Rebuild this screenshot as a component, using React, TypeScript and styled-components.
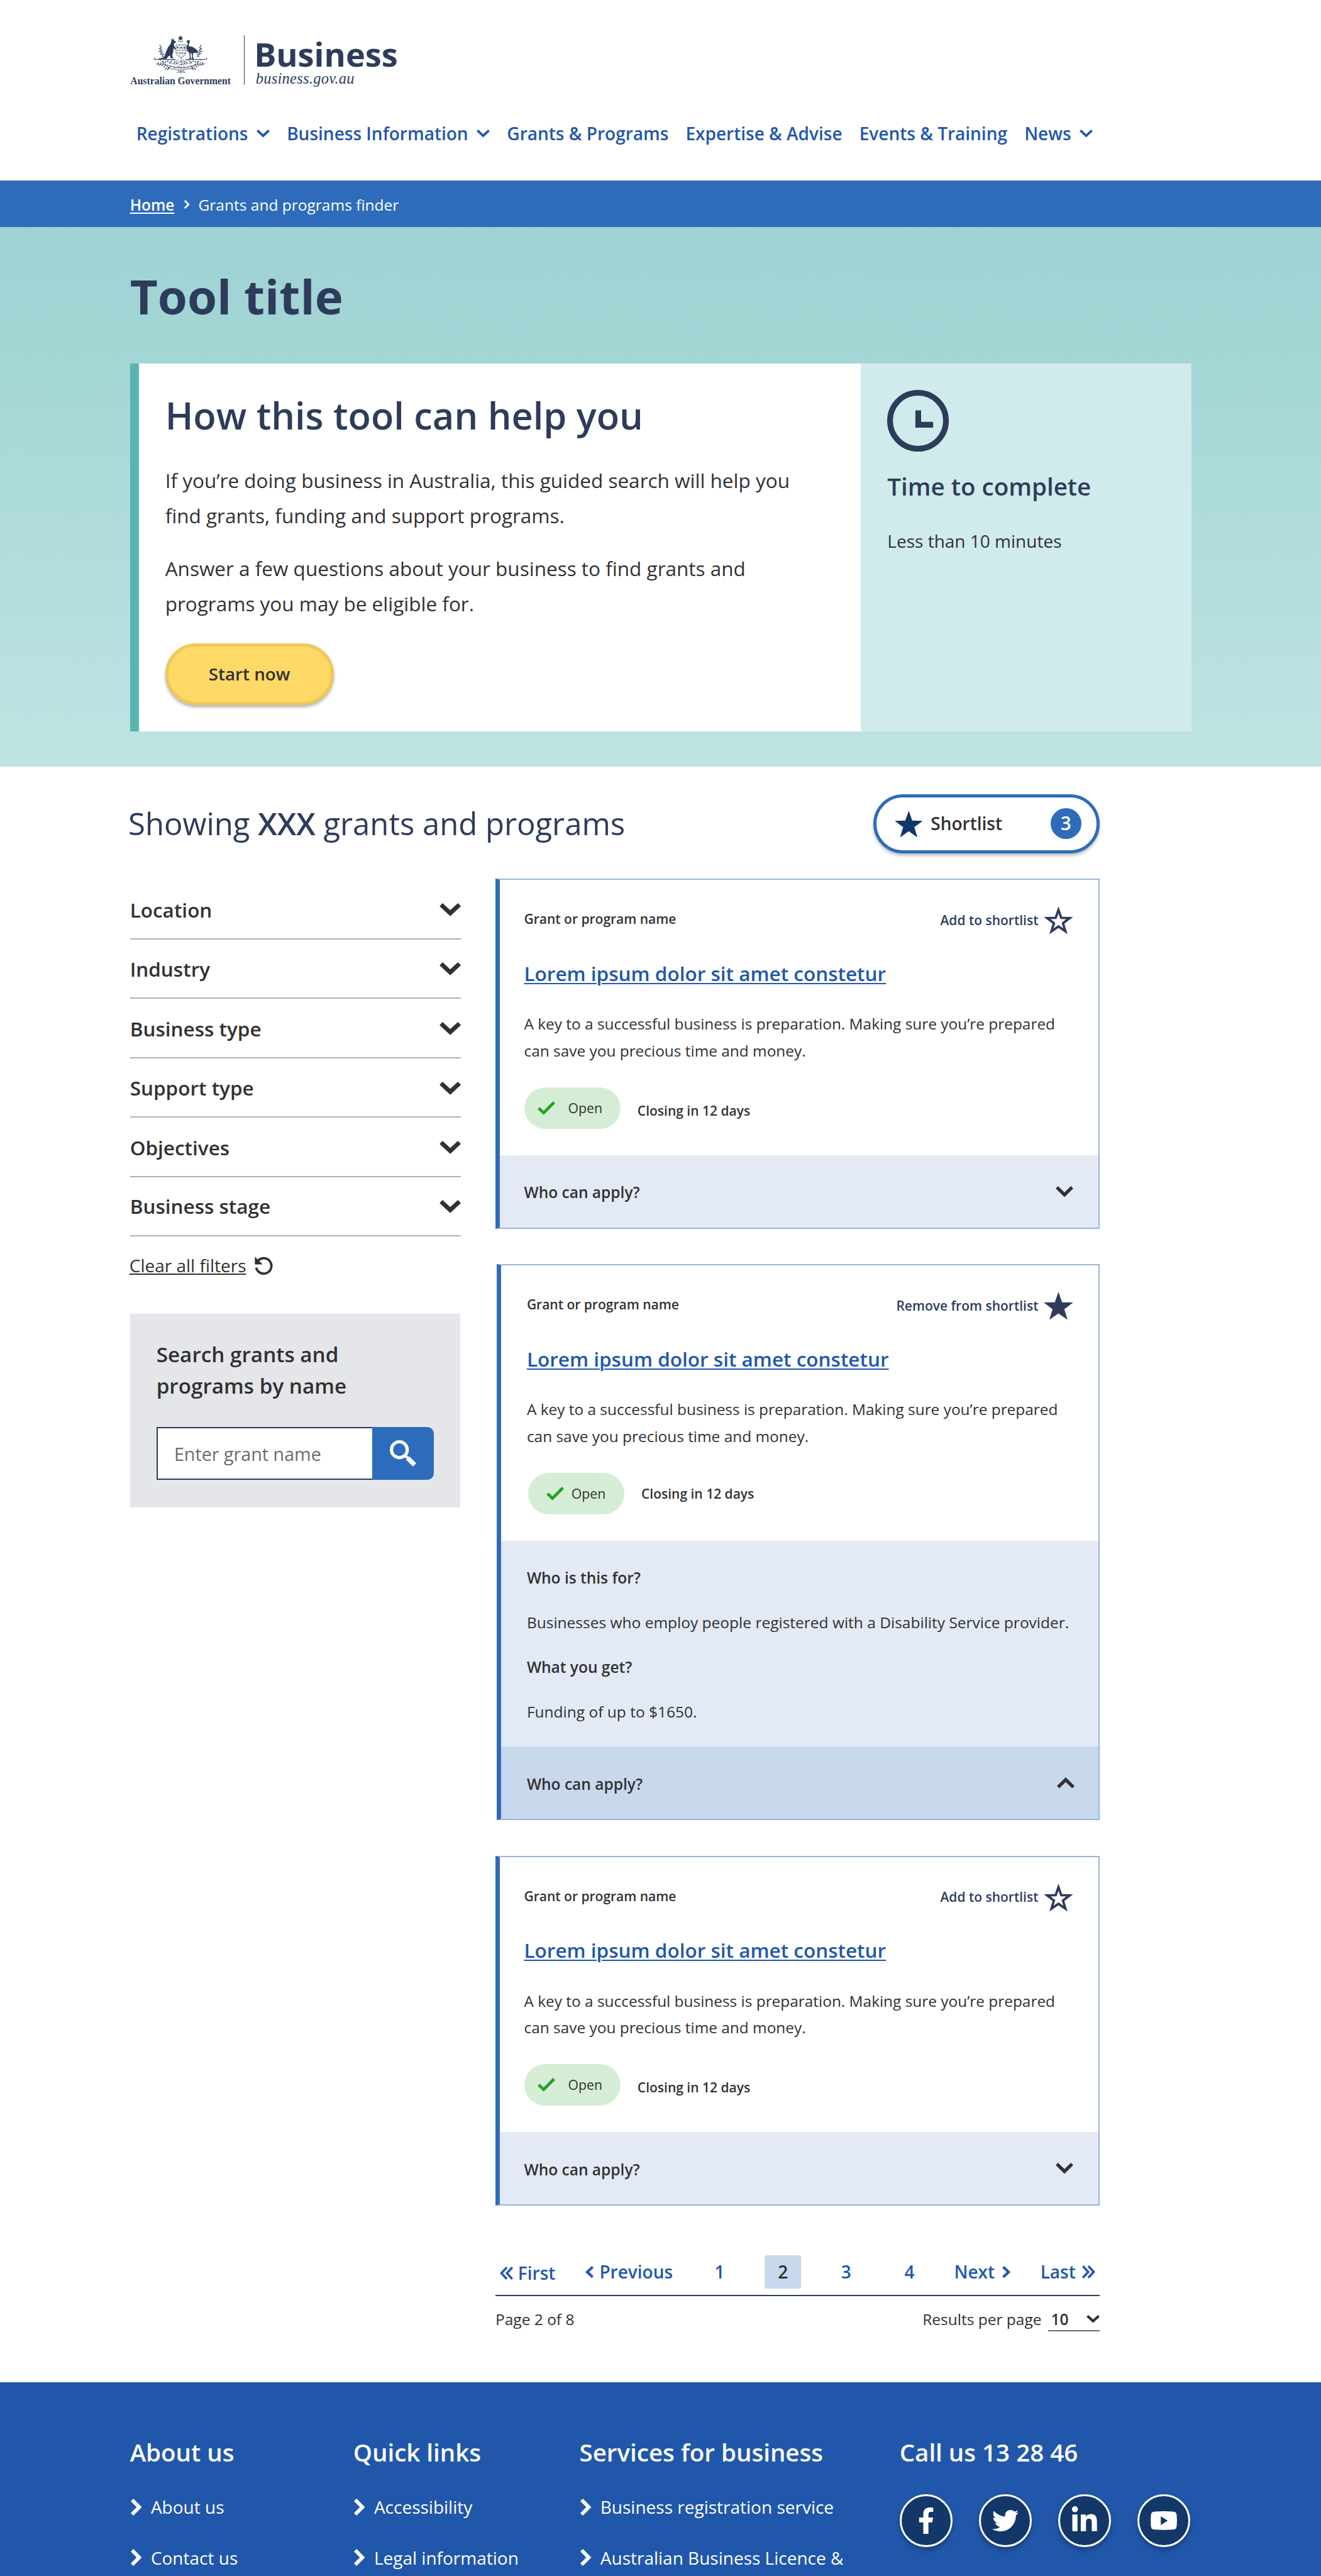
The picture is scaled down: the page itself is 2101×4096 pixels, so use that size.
import React from "react";
import styled, { createGlobalStyle, css } from "styled-components";
import { FaFacebookF, FaLinkedinIn, FaTwitter } from "react-icons/fa";

const color = {
  navy: "#2d3c5b",
  deep: "#11366a",
  link: "#1f57ab",
  blue: "#2e6cbb",
  footer: "#2157aa",
  text: "#313131",
  rule: "#a9b1bd",
  cardLine: "#9bb5db",
  pale: "#e3eaf6",
  paleActive: "#c8d8ed",
};

/* 1rem = 10 design units */
const GlobalStyle = createGlobalStyle`
  *, *::before, *::after { box-sizing: border-box; }
  html { font-size: 8.7555px; }
  body {
    margin: 0;
    background: #fff;
    color: ${color.text};
    font-family: "Open Sans", "Noto Sans", sans-serif;
  }
  h1, h2, h3, p, ul { margin: 0; padding: 0; }
  ul { list-style: none; }
  button, input { font-family: inherit; margin: 0; padding: 0; }
  svg { display: block; flex: none; overflow: visible; }
`;

/* ---------- icons ---------- */

type Direction = "down" | "up" | "left" | "right";

const Glyph = styled.svg<{ $w: number; $h: number }>`
  width: ${(p) => p.$w / 10}rem;
  height: ${(p) => p.$h / 10}rem;
`;

function chevronPoints(dir: Direction, w: number, h: number, s: number) {
  const e = s * 0.354;
  const t = s * 0.707;
  switch (dir) {
    case "down":
      return `${e},${e} ${w / 2},${h - t} ${w - e},${e}`;
    case "up":
      return `${e},${h - e} ${w / 2},${t} ${w - e},${h - e}`;
    case "left":
      return `${w - e},${e} ${t},${h / 2} ${w - e},${h - e}`;
    default:
      return `${e},${e} ${w - t},${h / 2} ${e},${h - e}`;
  }
}

function Chevron({ dir, w, h, s }: { dir: Direction; w: number; h: number; s: number }) {
  return (
    <Glyph $w={w} $h={h} viewBox={`0 0 ${w} ${h}`}>
      <polyline points={chevronPoints(dir, w, h, s)} fill="none" stroke="currentColor" strokeWidth={s} />
    </Glyph>
  );
}

function DoubleChevron({ dir }: { dir: "left" | "right" }) {
  const pts = chevronPoints(dir, 14, 24, 4);
  return (
    <Glyph $w={24} $h={24} viewBox="0 0 24 24">
      <g fill="none" stroke="currentColor" strokeWidth="4">
        <polyline points={pts} />
        <polyline points={pts} transform="translate(10 0)" />
      </g>
    </Glyph>
  );
}

function starPath(cx: number, cy: number, r: number) {
  const pts: string[] = [];
  for (let i = 0; i < 10; i++) {
    const radius = i % 2 ? r * 0.4 : r;
    const a = -Math.PI / 2 + (i * Math.PI) / 5;
    pts.push(`${(cx + radius * Math.cos(a)).toFixed(2)} ${(cy + radius * Math.sin(a)).toFixed(2)}`);
  }
  return `M${pts.join("L")}Z`;
}

function Star({ w, outline }: { w: number; outline?: boolean }) {
  const d = starPath(26.75, 28.1, 28.1) + (outline ? starPath(26.75, 28.1, 15) : "");
  return (
    <Glyph $w={w} $h={w * 0.95} viewBox="0 0 53.5 50.8">
      <path d={d} fill="currentColor" fillRule="evenodd" />
    </Glyph>
  );
}

function Check() {
  return (
    <Glyph $w={32} $h={25} viewBox="0 0 32 25">
      <polyline points="2,12.5 11,21 30,2" fill="none" stroke="#27a127" strokeWidth="5.4" />
    </Glyph>
  );
}

function Reset() {
  return (
    <Glyph $w={33} $h={33} viewBox="0 0 33 33">
      <path d="M2.8 20A14 14 0 1 0 6.6 7" fill="none" stroke="currentColor" strokeWidth="4.2" />
      <path d="M.4 .4V14.2H14.6Z" fill="currentColor" />
    </Glyph>
  );
}

function Magnifier() {
  return (
    <Glyph $w={48} $h={48} viewBox="0 0 48 48">
      <g fill="none" stroke="#fff">
        <circle cx="17.3" cy="17.3" r="14.4" strokeWidth="5.8" />
        <path d="M27 27L34 34" strokeWidth="5" />
        <path d="M32.5 32.5L45 45" strokeWidth="8.4" />
      </g>
    </Glyph>
  );
}

function Clock() {
  return (
    <Glyph $w={112} $h={112} viewBox="0 0 112 112">
      <circle cx="56" cy="56" r="50.8" fill="none" stroke={color.navy} strokeWidth="10.4" />
      <path d="M56.5 37V63.2H83.5" fill="none" stroke={color.navy} strokeWidth="10.4" />
    </Glyph>
  );
}

function YouTubeMark() {
  return (
    <Glyph $w={48} $h={34} viewBox="0 0 48 34">
      <path
        d="M6 .8Q24-.8 42 .8Q47 1.4 47.4 7Q48.4 17 47.4 27Q47 32.600 42 33.200Q24 34.800 6 33.200Q1 32.600 .6 27Q-.4 17 .6 7Q1 1.400 6 .8ZM18.500 9V25L31 17Z"
        fill="#fff"
        fillRule="evenodd"
      />
    </Glyph>
  );
}

function Sprig() {
  return (
    <g fill="none" stroke="currentColor" strokeLinecap="round">
      <path d="M178 158Q196 168 206 182Q220 190 246 196M186 104Q184 124 200 142M262 160Q236 164 232 178Q246 186 262 176" strokeWidth="2.200" />
      <path
        d="M182 80l4 10M190 92l-6 8M178 98l7 6M193 104l-5 9M176 114l10 3M198 116l-7 8M182 128l10 2M205 128l-8 6M192 140l10 1M164 182l9 3M172 174l4 9M178 190l8-5M186 176l3 9M192 192l7-6M198 178l4 9M204 200l6-7M210 184l5 8M212 212l7-9M222 190l4 8M224 214l4-11M232 200l-2 9M216 168l-6 7M226 162l-2 9M196 168l7 4M244 170l-8 4"
        strokeWidth="4"
      />
      <path d="M152 150q-4 8 8 8H264" strokeWidth="4" />
      <path d="M268 162q-12 12-4 24M280 160q-14 8-10 22q8 4 14-6" strokeWidth="3" />
    </g>
  );
}

function Crest() {
  return (
    <Glyph $w={96} $h={70} viewBox="150 26 288 210" color={color.navy}>
      <g fill="currentColor">
        <path d="M294 27l3 8 8-3-4 8 8 3-8 3 3 8-8-4-2 5-3-5-7 4 3-8-8-3 8-3-4-8 8 3z" />
        <path d="M281 58h6v4h-6zM291 58h7v4h-7zM302 58h6v4h-6z" />
        <path d="M245 44l7 7 2-9 5 12q9 3 12 11l-11 4q-4 8 1 18l9 14-4 3-11-8q3 14-3 26l-3 18 8 11h-18l-1-15q-11 4-15 12l-5 7h-42v-4q26-1 31-9q6-22 12-34q8-20 20-34q8-14 5-30z" />
        <path d="M325 61l7-7q8-5 12 2q3 6-2 14q-7 10-1 17q12-1 22 4q14 8 24 20q4 8-1 13q-6-3-12-3q-8 4-12 3v24l7 8h-12l-1-30-8-2 2 24 4 8h-13l4-8-3-26q-12-8-13-20q-5-14 4-26q3-6 1-9z" />
      </g>
      <Sprig />
      <g transform="translate(588 0) scale(-1 1)">
        <Sprig />
      </g>
      <g fill="none" stroke="currentColor">
        <path d="M270 80q27-6 54 0v36q0 22-27 32q-27-10-27-32z" strokeWidth="2.500" />
        <path d="M288 78v64M307 78v64M270 108h54" strokeWidth="1.600" />
        <path d="M279 86v14M273 93h12M316 86v16M310 94h12" strokeWidth="3" />
        <path d="M294 90l8 8M302 90l-8 8M276 122h8M292 126q6-8 12 0M312 124h8" strokeWidth="4" />
        <path d="M298 148v44M298 168q-14-2-22 12M298 168q14-2 22 12M298 184q-12 0-18 10M298 184q12 0 18 10" strokeWidth="2.600" />
        <path d="M236 194q62 16 118 0l-2 14q-58 14-114 0zM296 214v20M282 214q4 12-10 18M310 214q-2 12 12 18M288 222h20M278 228h38" strokeWidth="2.400" />
      </g>
      <CrestMotto x="296" y="209" textAnchor="middle">
        AUSTRALIA
      </CrestMotto>
    </Glyph>
  );
}

const CrestMotto = styled.text`
  font: 700 14px "Liberation Serif", serif;
  letter-spacing: 1px;
  fill: ${color.navy};
`;

/* ---------- page shell ---------- */

const Page = styled.div`
  display: flex;
  flex-direction: column;
  height: 100vh;
  overflow: hidden;
`;

const Header = styled.header`
  flex: none;
  height: 32.8rem;
  padding: 6.4rem 0 0 23.6rem;
  background: #fff;
`;

const Brand = styled.div`
  display: flex;
  height: 9.3rem;
  color: ${color.navy};
`;

const GovMark = styled.div`
  display: flex;
  flex-direction: column;
  align-items: center;
  justify-content: space-between;
  width: 18.4rem;
`;

const GovName = styled.div`
  font: 700 1.79rem/2rem "Liberation Serif", "Times New Roman", serif;
  white-space: nowrap;
`;

const BrandRule = styled.div`
  width: 1px;
  height: 9rem;
  margin: 0 1.75rem 0 2.3rem;
  background: ${color.navy};
`;

const Wordmark = styled.div`
  padding-top: 0.5rem;
`;

const WordmarkName = styled.div`
  font-weight: 700;
  font-size: 5.97rem;
  line-height: 5.9rem;
`;

const WordmarkUrl = styled.div`
  padding-left: 0.3rem;
  font: italic 400 2.8rem/3rem "Liberation Serif", serif;
  letter-spacing: 0.01em;
`;

const Nav = styled.nav`
  display: flex;
  align-items: center;
  gap: 3.1rem;
  height: 4rem;
  margin: 6.55rem 0 0 1.15rem;
`;

const NavItem = styled.a`
  display: flex;
  align-items: center;
  gap: 1.55rem;
  color: ${color.link};
  font-weight: 600;
  font-size: 3.2rem;
  line-height: 4rem;
  white-space: nowrap;
`;

const Breadcrumbs = styled.div`
  display: flex;
  flex: none;
  align-items: center;
  height: 8.4rem;
  padding: 0.3rem 0 0 23.6rem;
  background: ${color.blue};
  color: #fff;
  font-size: 2.8rem;
  line-height: 4rem;
`;

const Crumb = styled.a`
  margin-right: 1.75rem;
  font-weight: 600;
  text-decoration: underline;
  text-decoration-thickness: 2px;
  text-underline-offset: 0.35rem;
  text-decoration-skip-ink: none;
`;

const CrumbCurrent = styled.span`
  margin-left: 1.6rem;
`;

/* ---------- hero ---------- */

const Hero = styled.section`
  flex: none;
  height: 98rem;
  padding: 7.55rem 0 0 23.6rem;
  background: linear-gradient(#9fd2d2, #a4d6d6 25%, #bfe4e2);
`;

const ToolTitle = styled.h1`
  color: ${color.navy};
  font-weight: 700;
  font-size: 8.7rem;
  line-height: 10rem;
`;

const HeroCard = styled.div`
  display: flex;
  width: 192.8rem;
  height: 66.8rem;
  margin-top: 7.25rem;
`;

const HeroMain = styled.div`
  width: 132.8rem;
  padding: 5.35rem 0 0 4.8rem;
  border-left: 1.6rem solid #58b3b1;
  background: #fff;
`;

const HeroHeading = styled.h2`
  margin-bottom: 4.7rem;
  color: ${color.navy};
  font-weight: 600;
  font-size: 6.8rem;
  line-height: 8rem;
`;

const HeroText = styled.p`
  width: 118rem;
  margin-bottom: 3.2rem;
  font-size: 3.6rem;
  line-height: 6.4rem;
`;

const StartButton = styled.button`
  width: 30.6rem;
  height: 11.2rem;
  margin-top: 0.8rem;
  padding-bottom: 0.2rem;
  border: 0.6rem solid #edc95b;
  border-radius: 5.6rem;
  background: #ffd965;
  box-shadow: 0 0.4rem 0.6rem rgba(0, 0, 0, 0.3);
  color: ${color.text};
  font-weight: 600;
  font-size: 3.17rem;
  line-height: 4rem;
`;

const HeroAside = styled.div`
  flex: 1;
  padding: 4.8rem 0 0 4.8rem;
  background: #d0ebeb;
`;

const AsideHeading = styled.h3`
  margin-top: 3.35rem;
  color: ${color.navy};
  font-weight: 600;
  font-size: 4.4rem;
  line-height: 6rem;
`;

const AsideText = styled.p`
  margin-top: 4.5rem;
  font-size: 3.2rem;
  line-height: 4.8rem;
`;

/* ---------- results ---------- */

const Results = styled.main`
  flex: none;
  height: 293.4rem;
  padding: 5rem 0 0 23.6rem;
`;

const ResultsHead = styled.div`
  display: flex;
  align-items: center;
  justify-content: space-between;
  width: 176.2rem;
  height: 10.8rem;
`;

const ResultsTitle = styled.h2`
  margin-left: -0.3rem;
  padding-bottom: 0.2rem;
  color: ${color.navy};
  font-weight: 400;
  font-size: 5.6rem;
  line-height: 8rem;
`;

const ResultsCount = styled.strong`
  font-weight: 600;
`;

const ShortlistButton = styled.button`
  display: flex;
  align-items: center;
  width: 41.2rem;
  height: 10.8rem;
  padding: 0 2.8rem 0 3.3rem;
  border: 0.6rem solid ${color.blue};
  border-radius: 5.4rem;
  background: #fff;
  box-shadow: 0 0.4rem 0.6rem rgba(0, 0, 0, 0.25);
  color: ${color.deep};
`;

const ShortlistLabel = styled.span`
  flex: 1;
  margin-left: 1.5rem;
  color: ${color.text};
  font-weight: 600;
  font-size: 3.2rem;
  line-height: 4rem;
  text-align: left;
`;

const CountBadge = styled.span`
  width: 5.6rem;
  height: 5.6rem;
  border-radius: 50%;
  background: ${color.blue};
  color: #fff;
  font-weight: 600;
  font-size: 3.4rem;
  line-height: 5.4rem;
  text-align: center;
`;

const Columns = styled.div`
  display: grid;
  grid-template-columns: 60.1rem 109.8rem;
  column-gap: 6.3rem;
  margin-top: 4.6rem;
`;

const Filters = styled.ul`
  margin-top: 0.2rem;
`;

const FilterRow = styled.li`
  display: flex;
  align-items: center;
  justify-content: space-between;
  height: 10.8rem;
  padding-top: 0.25rem;
  border-bottom: 2px solid ${color.rule};
  font-weight: 600;
  font-size: 3.6rem;
  line-height: 5rem;

  &:last-child {
    padding-top: 0;
  }
`;

const ClearFilters = styled.a`
  display: flex;
  align-items: center;
  gap: 1.6rem;
  margin-top: 3.05rem;
  font-size: 3.2rem;
  line-height: 4.4rem;
`;

const ClearLabel = styled.span`
  margin-left: -0.1rem;
  text-decoration: underline;
  text-decoration-thickness: 2px;
  text-underline-offset: 0.25rem;
`;

const SearchPanel = styled.div`
  width: 60rem;
  height: 35.2rem;
  margin-top: 6.55rem;
  padding: 4.6rem 4.8rem 0;
  background: #e5e6ea;
`;

const SearchTitle = styled.h3`
  width: 40rem;
  font-weight: 600;
  font-size: 3.8rem;
  line-height: 5.7rem;
`;

const SearchForm = styled.div`
  display: flex;
  height: 9.6rem;
  margin-top: 4.6rem;
`;

const SearchInput = styled.div`
  width: 39.2rem;
  padding-left: 3rem;
  border: 2px solid ${color.navy};
  border-right: 0;
  background: #fff;
  color: #6c6c6c;
  font-size: 3.28rem;
  line-height: 9.3rem;
`;

const SearchButton = styled.button`
  display: flex;
  align-items: center;
  justify-content: center;
  width: 11.2rem;
  border: 0;
  border-radius: 0 1.2rem 1.2rem 0;
  background: ${color.blue};
`;

/* ---------- grant card ---------- */

const Card = styled.article<{ $expanded: boolean }>`
  display: flex;
  flex-direction: column;
  height: ${(p) => (p.$expanded ? "101rem" : "63.6rem")};
  margin-bottom: 6.4rem;
  border: 2px solid ${color.cardLine};
  border-left: 0.8rem solid ${color.blue};
  background: #fff;
  --inset: 4.4rem;
  ${(p) =>
    p.$expanded &&
    css`
      margin-left: 0.2rem;
      --inset: 4.7rem;
    `}
`;

const CardBody = styled.div`
  height: 50rem;
  padding: 4.7rem 4.6rem 0 var(--inset);
`;

const CardHead = styled.div`
  display: flex;
  align-items: center;
  justify-content: space-between;
  height: 5.2rem;
`;

const CardTag = styled.div`
  padding-bottom: 0.2rem;
  font-weight: 600;
  font-size: 2.4rem;
  line-height: 3.4rem;
`;

const ShortlistToggle = styled.a`
  display: flex;
  align-items: center;
  gap: 1rem;
  padding-top: 0.1rem;
  color: ${color.navy};
  font-weight: 600;
  font-size: 2.4rem;
  line-height: 3.4rem;
`;

const CardTitle = styled.a`
  display: block;
  margin-top: 4.6rem;
  color: ${color.link};
  font-weight: 600;
  font-size: 3.6rem;
  line-height: 5rem;
  text-decoration: underline;
  text-decoration-thickness: 2px;
  text-underline-offset: 0.35rem;
`;

const CardText = styled.p`
  margin-top: 4.27rem;
  font-size: 2.79rem;
  line-height: 4.88rem;
`;

const StatusRow = styled.div`
  display: flex;
  align-items: center;
  margin-top: 4.1rem;
`;

const StatusPill = styled.div<{ $compact: boolean }>`
  display: flex;
  align-items: center;
  gap: ${(p) => (p.$compact ? "1.4rem" : "2.4rem")};
  width: 17.5rem;
  height: 7.6rem;
  margin-left: ${(p) => (p.$compact ? "0.2rem" : "0")};
  padding-left: ${(p) => (p.$compact ? "3.3rem" : "2.4rem")};
  border-radius: 3.8rem;
  background: #d5edd5;
  font-size: 2.43rem;
  line-height: 3.4rem;
`;

const Closing = styled.div<{ $lowered: boolean }>`
  margin-left: 3.1rem;
  padding-top: ${(p) => (p.$lowered ? "1rem" : "0.3rem")};
  font-weight: 600;
  font-size: 2.4rem;
  line-height: 3.4rem;
`;

const Detail = styled.div`
  display: flex;
  flex-direction: column;
  gap: 3.3rem;
  height: 37.4rem;
  padding: 4.4rem 0 0 var(--inset);
  background: ${color.pale};
  font-size: 2.8rem;
  line-height: 4.8rem;
`;

const DetailHeading = styled.h3`
  font-weight: 600;
  font-size: 2.8rem;
`;

const ApplyStrip = styled.div<{ $expanded: boolean }>`
  display: flex;
  flex: 1;
  align-items: center;
  justify-content: space-between;
  padding: 0 ${(p) => (p.$expanded ? "4.4rem" : "4.6rem")} 0 var(--inset);
  background: ${(p) => (p.$expanded ? color.paleActive : color.pale)};
`;

const ApplyLabel = styled.div`
  padding-top: 0.3rem;
  font-weight: 600;
  font-size: 2.8rem;
  line-height: 4rem;
`;

function GrantCard({ expanded = false }: { expanded?: boolean }) {
  return (
    <Card $expanded={expanded}>
      <CardBody>
        <CardHead>
          <CardTag>Grant or program name</CardTag>
          <ShortlistToggle>
            {expanded ? "Remove from shortlist" : "Add to shortlist"}
            <Star w={53.5} outline={!expanded} />
          </ShortlistToggle>
        </CardHead>
        <CardTitle>Lorem ipsum dolor sit amet constetur</CardTitle>
        <CardText>
          A key to a successful business is preparation. Making sure you’re prepared
          <br />
          can save you precious time and money.
        </CardText>
        <StatusRow>
          <StatusPill $compact={expanded}>
            <Check />
            Open
          </StatusPill>
          <Closing $lowered={!expanded}>Closing in 12 days</Closing>
        </StatusRow>
      </CardBody>
      {expanded && (
        <Detail>
          <DetailHeading>Who is this for?</DetailHeading>
          <p>Businesses who employ people registered with a Disability Service provider.</p>
          <DetailHeading>What you get?</DetailHeading>
          <p>Funding of up to $1650.</p>
        </Detail>
      )}
      <ApplyStrip $expanded={expanded}>
        <ApplyLabel>Who can apply?</ApplyLabel>
        <Chevron dir={expanded ? "up" : "down"} w={32} h={20} s={6.2} />
      </ApplyStrip>
    </Card>
  );
}

/* ---------- pagination ---------- */

const Pagination = styled.div`
  display: flex;
  justify-content: space-between;
  height: 7.45rem;
  margin-top: 9rem;
  padding: 0 0.8rem;
  border-bottom: 2px solid ${color.navy};
  color: ${color.link};
  font-weight: 600;
  font-size: 3.2rem;
  line-height: 6.05rem;
`;

const PageLink = styled.a<{ $gap?: number; $drop?: boolean }>`
  display: flex;
  align-items: center;
  gap: ${(p) => (p.$gap ?? 0) / 10}rem;
  height: 6.05rem;
  padding-top: ${(p) => (p.$drop ? "0.4rem" : "0")};
`;

const PageGroup = styled.div`
  display: flex;
  gap: 5.4rem;
`;

const PageNumbers = styled.div`
  display: flex;
  gap: 4.9rem;
  margin-left: 0.4rem;
`;

const PageNumber = styled.a<{ $current?: boolean }>`
  width: 6.6rem;
  height: 6.05rem;
  border-radius: 0.4rem;
  text-align: center;
  ${(p) =>
    p.$current &&
    css`
      background: ${color.paleActive};
      color: ${color.text};
    `}
`;

const PageMeta = styled.div`
  display: flex;
  justify-content: space-between;
  margin-top: 2.1rem;
  font-size: 2.8rem;
  line-height: 4rem;
`;

const PerPage = styled.div`
  display: flex;
  gap: 1.2rem;
`;

const PerPageSelect = styled.div`
  display: flex;
  align-items: center;
  justify-content: space-between;
  width: 9.4rem;
  height: 4.25rem;
  padding-left: 0.5rem;
  border-bottom: 2px solid #6a6a6a;
  font-weight: 600;
`;

/* ---------- footer ---------- */

const Footer = styled.footer`
  display: flex;
  flex: 1 0 auto;
  padding: 9.75rem 0 0 23.6rem;
  background: ${color.footer};
  color: #fff;
`;

const FooterColumn = styled.div<{ $w: number }>`
  width: ${(p) => p.$w / 10}rem;
`;

const FooterHeading = styled.h3`
  font-weight: 600;
  font-size: 4.4rem;
  line-height: 6rem;
  white-space: nowrap;
`;

const FooterLinks = styled.ul`
  display: flex;
  flex-direction: column;
  gap: 4.8rem;
  margin-top: 4.75rem;
`;

const FooterLink = styled.li`
  display: flex;
  align-items: center;
  gap: 1.6rem;
  padding-left: 0.2rem;
  font-size: 3.2rem;
  line-height: 4.4rem;
  white-space: nowrap;
`;

const Socials = styled.div`
  display: flex;
  gap: 4.8rem;
  margin-top: 4.6rem;
`;

const SocialButton = styled.a<{ $size?: number }>`
  display: flex;
  align-items: center;
  justify-content: center;
  width: 9.6rem;
  height: 9.6rem;
  border: 0.4rem solid #fff;
  border-radius: 50%;
  background: #123768;
  box-shadow: 0 0.6rem 1rem rgba(0, 0, 0, 0.25);
  font-size: ${(p) => (p.$size ?? 48) / 10}rem;
`;

const NAV = [
  { label: "Registrations", menu: true },
  { label: "Business Information", menu: true },
  { label: "Grants & Programs" },
  { label: "Expertise & Advise" },
  { label: "Events & Training" },
  { label: "News", menu: true },
];

const FILTERS = ["Location", "Industry", "Business type", "Support type", "Objectives", "Business stage"];

const FOOTER = [
  { title: "About us", width: 405.5, links: ["About us", "Contact us"] },
  { title: "Quick links", width: 411, links: ["Accessibility", "Legal information"] },
  { title: "Services for business", width: 581.5, links: ["Business registration service", "Australian Business Licence &"] },
];

export default function App() {
  return (
    <Page>
      <GlobalStyle />
      <Header>
        <Brand>
          <GovMark>
            <Crest />
            <GovName>Australian Government</GovName>
          </GovMark>
          <BrandRule />
          <Wordmark>
            <WordmarkName>Business</WordmarkName>
            <WordmarkUrl>business.gov.au</WordmarkUrl>
          </Wordmark>
        </Brand>
        <Nav>
          {NAV.map((item) => (
            <NavItem key={item.label}>
              {item.label}
              {item.menu && <Chevron dir="down" w={24} h={14.5} s={4.4} />}
            </NavItem>
          ))}
        </Nav>
      </Header>

      <Breadcrumbs>
        <Crumb>Home</Crumb>
        <Chevron dir="right" w={10} h={16} s={3.2} />
        <CrumbCurrent>Grants and programs finder</CrumbCurrent>
      </Breadcrumbs>

      <Hero>
        <ToolTitle>Tool title</ToolTitle>
        <HeroCard>
          <HeroMain>
            <HeroHeading>How this tool can help you</HeroHeading>
            <HeroText>
              If you’re doing business in Australia, this guided search will help you find grants, funding and support programs.
            </HeroText>
            <HeroText>Answer a few questions about your business to find grants and programs you may be eligible for.</HeroText>
            <StartButton>Start now</StartButton>
          </HeroMain>
          <HeroAside>
            <Clock />
            <AsideHeading>Time to complete</AsideHeading>
            <AsideText>Less than 10 minutes</AsideText>
          </HeroAside>
        </HeroCard>
      </Hero>

      <Results>
        <ResultsHead>
          <ResultsTitle>
            Showing <ResultsCount>XXX</ResultsCount> grants and programs
          </ResultsTitle>
          <ShortlistButton>
            <Star w={51} />
            <ShortlistLabel>Shortlist</ShortlistLabel>
            <CountBadge>3</CountBadge>
          </ShortlistButton>
        </ResultsHead>

        <Columns>
          <div>
            <Filters>
              {FILTERS.map((name) => (
                <FilterRow key={name}>
                  {name}
                  <Chevron dir="down" w={39} h={24} s={8} />
                </FilterRow>
              ))}
            </Filters>
            <ClearFilters>
              <ClearLabel>Clear all filters</ClearLabel>
              <Reset />
            </ClearFilters>
            <SearchPanel>
              <SearchTitle>Search grants and programs by name</SearchTitle>
              <SearchForm>
                <SearchInput>Enter grant name</SearchInput>
                <SearchButton>
                  <Magnifier />
                </SearchButton>
              </SearchForm>
            </SearchPanel>
          </div>

          <div>
            <GrantCard />
            <GrantCard expanded />
            <GrantCard />

            <Pagination>
              <PageGroup>
                <PageLink $gap={9} $drop>
                  <DoubleChevron dir="left" />
                  First
                </PageLink>
                <PageLink $gap={11}>
                  <Chevron dir="left" w={15} h={22} s={4.8} />
                  Previous
                </PageLink>
              </PageGroup>
              <PageNumbers>
                <PageNumber>1</PageNumber>
                <PageNumber $current>2</PageNumber>
                <PageNumber>3</PageNumber>
                <PageNumber>4</PageNumber>
              </PageNumbers>
              <PageGroup>
                <PageLink $gap={14}>
                  Next
                  <Chevron dir="right" w={15} h={22} s={4.8} />
                </PageLink>
                <PageLink $gap={12}>
                  Last
                  <DoubleChevron dir="right" />
                </PageLink>
              </PageGroup>
            </Pagination>
            <PageMeta>
              <span>Page 2 of 8</span>
              <PerPage>
                Results per page
                <PerPageSelect>
                  10
                  <Chevron dir="down" w={24} h={14.5} s={4.8} />
                </PerPageSelect>
              </PerPage>
            </PageMeta>
          </div>
        </Columns>
      </Results>

      <Footer>
        {FOOTER.map((col) => (
          <FooterColumn key={col.title} $w={col.width}>
            <FooterHeading>{col.title}</FooterHeading>
            <FooterLinks>
              {col.links.map((link) => (
                <FooterLink key={link}>
                  <Chevron dir="right" w={20} h={31} s={6.6} />
                  {link}
                </FooterLink>
              ))}
            </FooterLinks>
          </FooterColumn>
        ))}
        <FooterColumn $w={530}>
          <FooterHeading>Call us 13 28 46</FooterHeading>
          <Socials>
            <SocialButton>
              <FaFacebookF />
            </SocialButton>
            <SocialButton>
              <FaTwitter />
            </SocialButton>
            <SocialButton $size={52}>
              <FaLinkedinIn />
            </SocialButton>
            <SocialButton>
              <YouTubeMark />
            </SocialButton>
          </Socials>
        </FooterColumn>
      </Footer>
    </Page>
  );
}
